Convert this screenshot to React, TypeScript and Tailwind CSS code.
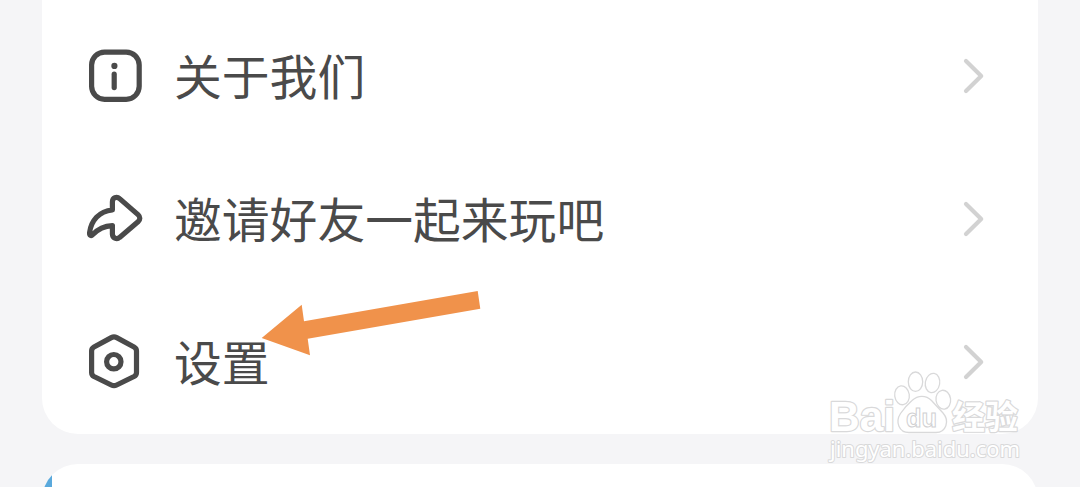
import React from "react";

type MenuItem = {
  id: string;
  label: string;
  icon: React.ReactNode;
};

const InfoIcon = () => (
  <svg className="size-[60px]" viewBox="0 0 60 60" fill="none" stroke="#4a4a4a" strokeWidth="5.2">
    <rect x="6.6" y="6.1" width="47.6" height="47.2" rx="13" />
    <circle cx="29.4" cy="19.9" r="3.1" fill="#4a4a4a" stroke="none" />
    <path d="M29.2 28.2v13.4" strokeLinecap="round" />
  </svg>
);

const ShareIcon = () => (
  <svg
    className="size-[60px]"
    viewBox="0 0 60 60"
    fill="none"
    stroke="#4a4a4a"
    strokeWidth="5.2"
    strokeLinejoin="round"
  >
    <path d="M27.4 21V13C27.4 8.4 31.8 7 34.6 9.6L53 25.6C55.4 27.8 55.4 30.6 53 32.8L34.6 48.4C31.8 50.9 27.4 49 27.4 45V36.6C19 37 12.5 40.5 7.8 45.6C6 47.5 4.3 46.5 4.6 43.6C6 32 14 22 27.4 21Z" />
  </svg>
);

const SettingsIcon = () => (
  <svg
    className="size-[60px]"
    viewBox="0 0 60 60"
    fill="none"
    stroke="#4a4a4a"
    strokeWidth="5.2"
    strokeLinejoin="round"
  >
    <path d="M26.3 5.6Q29 4.2 31.7 5.6L49 15Q51.5 16.3 51.5 19V40.5Q51.5 43.2 49 44.5L31.7 53Q29 54.4 26.3 53L9 44.5Q6.6 43.2 6.6 40.5V19Q6.6 16.3 9 15Z" />
    <circle cx="28.8" cy="29.7" r="7.2" />
  </svg>
);

const Chevron = () => (
  <svg
    className="h-10 w-6"
    viewBox="0 0 24 40"
    fill="none"
    stroke="#d2d2d2"
    strokeWidth="4.2"
    strokeLinecap="round"
    strokeLinejoin="round"
  >
    <path d="M4 5l15.2 15L4 35" />
  </svg>
);

const menuItems: MenuItem[] = [
  { id: "about", label: "关于我们", icon: <InfoIcon /> },
  { id: "invite", label: "邀请好友一起来玩吧", icon: <ShareIcon /> },
  { id: "settings", label: "设置", icon: <SettingsIcon /> },
];

const Row = ({ item }: { item: MenuItem }) => (
  <div className="flex h-[143px] items-center pr-[52px] pl-[43px]">
    {item.icon}
    <span className="mb-[2px] ml-[29px] flex-1 text-[47.8px] leading-[60px] text-[#4a4a4a]">
      {item.label}
    </span>
    <Chevron />
  </div>
);

// Orange arrow pointing at the settings row
const Pointer = () => (
  <svg className="absolute top-[285px] left-[255px] h-[75px] w-[230px]" viewBox="255 285 230 75">
    <path
      d="M261.7 338L301.7 304.7L304 321.3L477.7 291L480.3 308.7L307.7 338.7L310 355.3Z"
      fill="#f0924b"
    />
  </svg>
);

const Watermark = () => (
  <svg
    className="absolute top-[365px] left-[820px] h-[105px] w-[210px]"
    viewBox="820 365 210 105"
    fill="#fff"
    stroke="#d9d9da"
    strokeWidth="1.3"
  >
    <g strokeWidth="2.4" paintOrder="stroke" strokeLinejoin="round">
      <text
        x="829"
        y="430.5"
        fontSize="42"
        fontWeight="bold"
        fontFamily="'Liberation Sans', sans-serif"
        textLength="66"
        lengthAdjust="spacingAndGlyphs"
      >
        Bai
      </text>
      <text
        x="952"
        y="428.5"
        fontSize="33"
        fontWeight="bold"
        fontFamily="'Noto Sans CJK SC', sans-serif"
        textLength="66"
        lengthAdjust="spacingAndGlyphs"
      >
        经验
      </text>
      <text
        x="830"
        y="457"
        fontSize="21.5"
        strokeWidth="2"
        fontFamily="'Noto Sans', sans-serif"
        textLength="190"
        lengthAdjust="spacingAndGlyphs"
      >
        jingyan.baidu.com
      </text>
    </g>
    <ellipse cx="902" cy="395.3" rx="7.3" ry="9.5" transform="rotate(-8 902 395.3)" />
    <ellipse cx="915.5" cy="381.7" rx="7.2" ry="9.7" />
    <ellipse cx="932.5" cy="383" rx="7.2" ry="9.7" transform="rotate(10 932.5 383)" />
    <ellipse cx="943.3" cy="399.7" rx="7.3" ry="9.5" transform="rotate(-8 943.3 399.7)" />
    <path d="M912 400.5C918 395 926 395 931.5 400.5L943 413C950 421 946 432.5 936 432.5H909C899 432.5 895 422 900.5 413.5C903.5 409 908 404 912 400.5Z" />
    <text
      x="906"
      y="427"
      fontSize="26"
      fontFamily="'Liberation Sans', sans-serif"
      fontWeight="bold"
      stroke="#d0d0d2"
      strokeWidth="1"
      textLength="31"
      lengthAdjust="spacingAndGlyphs"
    >
      du
    </text>
  </svg>
);

export default function App() {
  return (
    <div className="relative flex h-[487px] w-[1080px] flex-col overflow-hidden bg-[#f5f5f7] px-[42px] font-['Noto_Sans_CJK_SC',sans-serif]">
      <div className="h-[434px] shrink-0 rounded-b-[36px] bg-white pt-1">
        {menuItems.map((item) => (
          <Row key={item.id} item={item} />
        ))}
      </div>
      <div className="mt-[30px] flex h-20 shrink-0 overflow-hidden rounded-t-[36px] bg-white">
        <div className="w-[10px] bg-[#5aa9dc]" />
      </div>
      <Pointer />
      <Watermark />
    </div>
  );
}
